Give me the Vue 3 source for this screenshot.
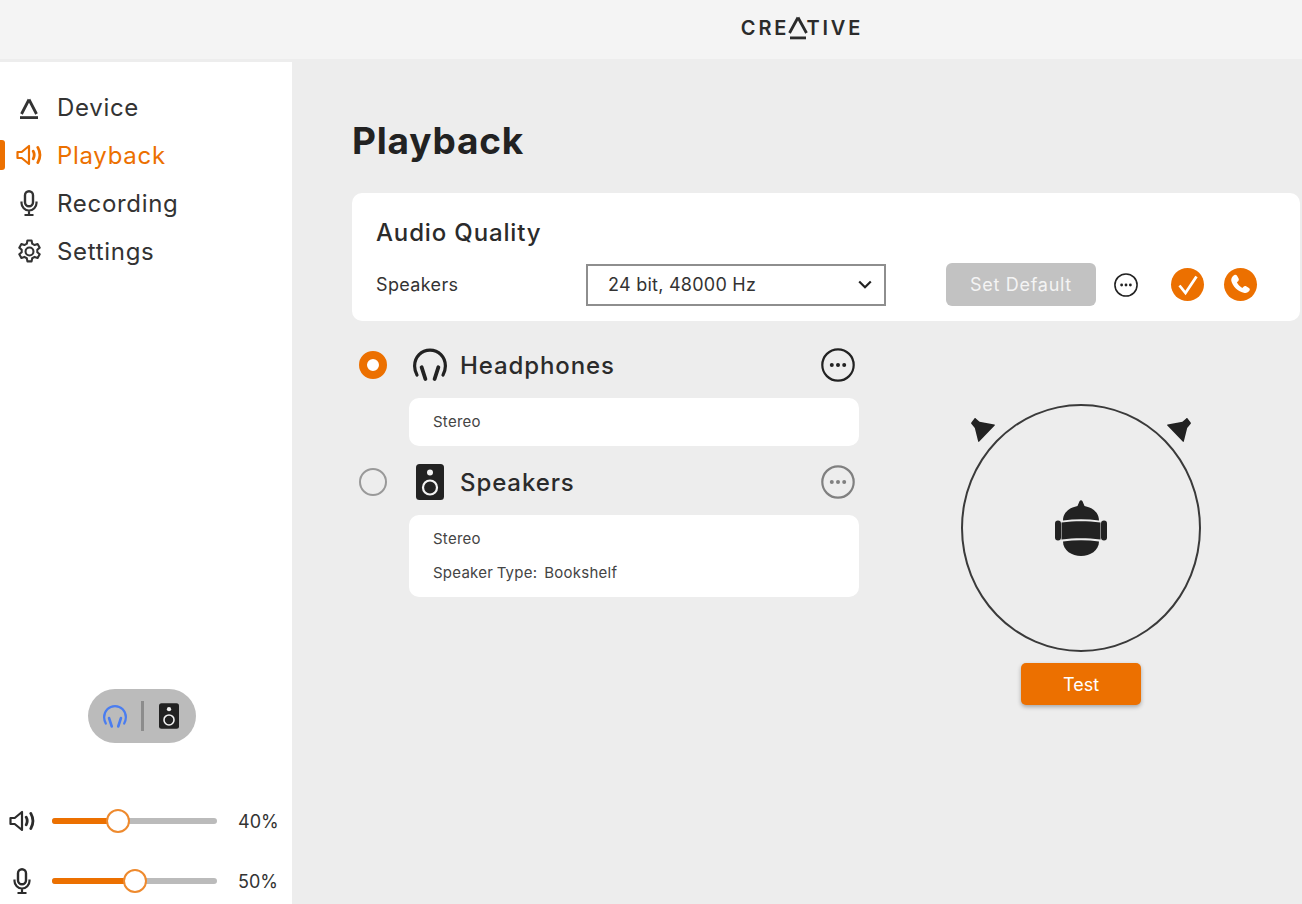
<template>
  <div class="app">
    <svg class="defs" aria-hidden="true">
      <symbol id="i-headphones" viewBox="0 0 34 34">
        <path d="M4 27C2.400 24 1.600 21 1.600 18 1.600 9 8.400 2.200 17 2.200S32.400 9 32.400 18c0 3-.8 6-2.400 9" fill="none" stroke="currentColor" stroke-width="3.200" stroke-linecap="round" />
        <path d="M8.600 19.200 12.400 31M25.400 19.200 21.600 31" fill="none" stroke="currentColor" stroke-width="3.800" stroke-linecap="round" />
      </symbol>
      <symbol id="i-speaker" viewBox="0 0 28 36">
        <rect width="28" height="36" rx="3.500" fill="#222" />
        <circle cx="14" cy="8.500" r="3" fill="#f2f2f2" />
        <circle cx="14" cy="23.500" r="7" fill="none" stroke="#f2f2f2" stroke-width="2.200" />
      </symbol>
      <symbol id="i-volume" viewBox="0 0 26 22">
        <path d="M1.500 8h4.200L13 2v18l-7.300-6H1.500z" fill="none" stroke="currentColor" stroke-width="2.200" stroke-linejoin="round" />
        <path d="M17.200 7.200c1.300 2.400 1.300 5.200 0 7.600M21.800 3.400c2.600 4.600 2.600 10.600 0 15.200" fill="none" stroke="currentColor" stroke-width="2.800" stroke-linecap="round" />
      </symbol>
      <symbol id="i-mic" viewBox="0 0 18 26">
        <rect x="5" y="1.200" width="8" height="15" rx="4" fill="none" stroke="currentColor" stroke-width="2.400" />
        <path d="M1.500 11.500v1.500a7.500 7.500 0 0 0 15 0v-1.500M9 20.500V24.500M4.500 25h9" fill="none" stroke="currentColor" stroke-width="2.200" />
      </symbol>
      <symbol id="i-gear" viewBox="0 0 24 24">
        <path d="M10 1.500h4l.6 3 2.300 1.300 2.900-1 2 3.500-2.300 2v2.400l2.300 2-2 3.500-2.900-1-2.300 1.300-.6 3h-4l-.6-3-2.300-1.300-2.900 1-2-3.500 2.300-2v-2.400l-2.300-2 2-3.500 2.900 1 2.300-1.300z" fill="none" stroke="currentColor" stroke-width="2" stroke-linejoin="round" />
        <circle cx="12" cy="12" r="3.800" fill="none" stroke="currentColor" stroke-width="2" />
      </symbol>
      <symbol id="i-logo" viewBox="0 0 20 24">
        <path d="M10 4.500 2.500 19M10 4.500 17.500 19" fill="none" stroke="currentColor" stroke-width="2.800" />
        <rect x="1" y="21.200" width="18" height="2.800" fill="currentColor" />
      </symbol>
      <symbol id="i-more" viewBox="0 0 34 34">
        <circle cx="17" cy="17" r="15.700" fill="none" stroke="currentColor" stroke-width="2.200" />
        <circle cx="10.800" cy="17" r="2" fill="currentColor" />
        <circle cx="17" cy="17" r="2" fill="currentColor" />
        <circle cx="23.200" cy="17" r="2" fill="currentColor" />
      </symbol>
      <symbol id="i-cone" viewBox="0 0 24 24">
        <path d="M4.800.4 8.600 3.800 23.400 6.400c.6.100.7.600.3 1L8.300 23.600c-.4.500-1 .4-1.200-.3L3.800 10 .5 6c-.5-.5-.5-1.200 0-1.700L3.400.4c.4-.4 1-.4 1.400 0z" fill="#222" />
      </symbol>
    </svg>

    <header class="topbar">
      <div class="logo">CRE<span class="logo-a">A<svg viewBox="0 0 22 24"><path d="M11 1.500 2.500 17M11 1.500l8.500 15.500" fill="none" stroke="#2b2b2b" stroke-width="2.800" /><rect x="3" y="20.500" width="16" height="2.800" fill="#2b2b2b" /></svg></span>TIVE</div>
    </header>

    <div class="body">
      <aside class="sidebar">
        <nav class="nav">
          <a v-for="item in navItems" :key="item.label" class="nav-item" :class="{ active: item.active }">
            <span class="nav-icon">
              <svg :width="item.w" :height="item.h"><use :href="item.icon" /></svg>
            </span>
            <span>{{ item.label }}</span>
          </a>
        </nav>

        <div class="spacer"></div>

        <div class="output-toggle">
          <svg class="t-head" width="24" height="25"><use href="#i-headphones" /></svg>
          <span class="t-sep"></span>
          <svg width="20" height="26"><use href="#i-speaker" /></svg>
        </div>

        <div class="sliders">
          <div v-for="s in sliders" :key="s.icon" class="slider-row">
            <span class="slider-icon">
              <svg :width="s.w" :height="s.h"><use :href="s.icon" /></svg>
            </span>
            <div class="track">
              <div class="fill" :style="{ width: s.value + '%' }"></div>
              <div class="thumb" :style="{ left: s.value + '%' }"></div>
            </div>
            <span class="pct">{{ s.value }}%</span>
          </div>
        </div>
      </aside>

      <main class="main">
        <h1 class="title">Playback</h1>

        <section class="card">
          <h2 class="card-title">Audio Quality</h2>
          <div class="card-row">
            <span class="row-label">Speakers</span>
            <div class="select">
              <span>24 bit, 48000 Hz</span>
              <svg width="14" height="9" viewBox="0 0 14 9"><path d="M1.200 1.500 7 7.200l5.800-5.700" fill="none" stroke="#222" stroke-width="2.200" /></svg>
            </div>
            <button class="btn-default">Set Default</button>
            <svg class="more-small" width="24" height="24"><use href="#i-more" /></svg>
            <span class="badge first">
              <svg width="22" height="22" viewBox="0 0 22 22"><path d="M2.500 11.500 8.500 19 19.500 2.500" fill="none" stroke="#fff" stroke-width="2.800" /></svg>
            </span>
            <span class="badge">
              <svg width="27" height="27" viewBox="0 0 24 24"><path d="M6.600 3.500c.8-.4 1.700-.2 2.200.6l1.500 2.600c.4.800.3 1.700-.4 2.300l-1.100 1c.9 2 2.700 3.900 4.800 5l1.100-1.100c.6-.6 1.500-.8 2.300-.3l2.500 1.500c.8.500 1 1.500.5 2.300-1 1.500-2.700 2.500-4.400 2.100C9.500 18.300 5 13.600 3.800 8.700c-.3-2.100.9-4.100 2.800-5.200z" fill="#fff" /></svg>
            </span>
          </div>
        </section>

        <div class="content">
          <div class="outputs">
            <div v-for="o in outputs" :key="o.name" class="output">
              <div class="output-head">
                <span class="radio" :class="{ on: o.selected }"></span>
                <span class="output-icon">
                  <svg :width="o.w" :height="o.h"><use :href="o.icon" /></svg>
                </span>
                <span class="output-name">{{ o.name }}</span>
                <svg class="more" :class="{ dim: !o.selected }" width="34" height="34"><use href="#i-more" /></svg>
              </div>
              <div class="details">
                <div v-for="line in o.details" :key="line" class="detail">{{ line }}</div>
              </div>
            </div>
          </div>

          <div class="stage">
            <div class="ring">
              <svg class="cone left" width="24" height="24"><use href="#i-cone" /></svg>
              <svg class="cone right" width="24" height="24"><use href="#i-cone" /></svg>
              <svg class="head" width="52" height="56" viewBox="0 0 52 56">
                <path d="M8 20.500C8 12 15 7.500 22.500 6L24.500 1.200c.7-1.200 2.300-1.200 3 0L29.500 6C37 7.500 44 12 44 20.500 32 18.900 20 18.900 8 20.500z" fill="#222" />
                <path d="M6.500 22.500C20 20.700 32 20.700 45.500 22.500V39.500C32 37.800 20 37.800 6.500 39.500z" fill="#222" />
                <rect x="0" y="20.500" width="6" height="20" rx="3" fill="#222" />
                <rect x="46" y="20.500" width="6" height="20" rx="3" fill="#222" />
                <path d="M8 41.500C20 39.900 32 39.900 44 41.500 44 50.500 35 56 26 56S8 50.500 8 41.500z" fill="#222" />
              </svg>
            </div>
            <button class="btn-test">Test</button>
          </div>
        </div>
      </main>
    </div>
  </div>
</template>

<script setup>
const navItems = [
  { label: 'Device', icon: '#i-logo', w: 20, h: 24 },
  { label: 'Playback', icon: '#i-volume', w: 26, h: 22, active: true },
  { label: 'Recording', icon: '#i-mic', w: 18, h: 26 },
  { label: 'Settings', icon: '#i-gear', w: 25, h: 25 }
]

const sliders = [
  { icon: '#i-volume', w: 27, h: 22, value: 40 },
  { icon: '#i-mic', w: 18, h: 26, value: 50 }
]

const outputs = [
  { name: 'Headphones', icon: '#i-headphones', w: 34, h: 34, selected: true, details: ['Stereo'] },
  { name: 'Speakers', icon: '#i-speaker', w: 28, h: 36, selected: false, details: ['Stereo', 'Speaker Type:  Bookshelf'] }
]
</script>

<style>
html, body {
  margin: 0;
  background: #ededed;
}
</style>

<style scoped>
.app {
  width: 1302px;
  height: 904px;
  overflow: hidden;
  display: flex;
  flex-direction: column;
  background: #ededed;
  color: #222;
  font-family: Inter, "Liberation Sans", sans-serif;
}

.defs {
  width: 0;
  height: 0;
  position: absolute;
}

.topbar {
  height: 59px;
  flex: none;
  background: #f4f4f4;
  display: flex;
  align-items: center;
  justify-content: center;
  padding-left: 302px;
  box-sizing: border-box;
}

.logo {
  font-size: 20px;
  font-weight: 600;
  letter-spacing: 2.800px;
  color: #2b2b2b;
  line-height: 24px;
  margin-bottom: 3px;
}

.logo-a {
  position: relative;
  color: transparent;
}

.logo-a svg {
  position: absolute;
  left: -2px;
  top: 0;
  width: 22px;
  height: 24px;
}

.body {
  flex: 1;
  display: flex;
  min-height: 0;
  padding-top: 3px;
}

.sidebar {
  width: 292px;
  flex: none;
  background: #fff;
  display: flex;
  flex-direction: column;
  padding-top: 21px;
  padding-bottom: 3px;
  box-sizing: border-box;
}

.nav {
  display: flex;
  flex-direction: column;
}

.nav-item {
  height: 48px;
  display: flex;
  align-items: center;
  position: relative;
  font-size: 24px;
  color: #333;
  letter-spacing: 0.700px;
}

.nav-item.active {
  color: #ec7000;
}

.nav-item.active::before {
  content: "";
  position: absolute;
  left: 0;
  top: 9px;
  width: 5px;
  height: 30px;
  border-radius: 0 3px 3px 0;
  background: #ec7000;
}

.nav-icon {
  display: flex;
  justify-content: center;
  width: 57px;
  box-sizing: border-box;
  padding-left: 1px;
  flex: none;
}

.spacer {
  flex: 1;
}

.output-toggle {
  align-self: flex-start;
  margin-left: 88px;
  width: 108px;
  height: 54px;
  box-sizing: border-box;
  border-radius: 27px;
  background: #bbb;
  display: flex;
  align-items: center;
  padding-left: 15px;
}

.t-head {
  color: #4a7df0;
}

.t-sep {
  width: 3px;
  height: 30px;
  background: #8c8c8c;
  margin: 0 15px 0 14px;
}

.sliders {
  margin-top: 58px;
  display: flex;
  flex-direction: column;
  gap: 20px;
}

.slider-row {
  height: 40px;
  display: flex;
  align-items: center;
  padding-left: 9px;
  color: #2b2b2b;
}

.slider-icon {
  width: 26px;
  display: flex;
  justify-content: center;
  flex: none;
}

.track {
  margin-left: 17px;
  width: 165px;
  height: 6px;
  border-radius: 3px;
  background: #bbb;
  position: relative;
  flex: none;
}

.fill {
  height: 100%;
  border-radius: 3px;
  background: #ec7000;
}

.thumb {
  position: absolute;
  top: 50%;
  width: 24px;
  height: 24px;
  border: 2px solid #ee8a2e;
  border-radius: 50%;
  background: #fff;
  transform: translate(-50%, -50%);
  box-sizing: border-box;
}

.pct {
  margin-left: 21px;
  font-size: 18px;
  color: #333;
}

.main {
  flex: 1;
  min-width: 0;
  padding: 0 2px 0 60px;
}

.title {
  margin: 56px 0 0;
  height: 46px;
  line-height: 46px;
  font-size: 37px;
  font-weight: 700;
  letter-spacing: 0.800px;
  color: #222;
}

.card {
  margin-top: 29px;
  height: 128px;
  box-sizing: border-box;
  background: #fff;
  border-radius: 10px;
  padding: 24px 24px 0;
}

.card-title {
  margin: 0;
  font-size: 24px;
  line-height: 32px;
  font-weight: 500;
  letter-spacing: 0.850px;
  color: #2b2b2b;
}

.card-row {
  margin-top: 14px;
  height: 43px;
  display: flex;
  align-items: center;
}

.row-label {
  width: 210px;
  flex: none;
  font-size: 18px;
  letter-spacing: 0.350px;
  color: #333;
}

.select {
  width: 300px;
  height: 42px;
  box-sizing: border-box;
  border: 2px solid #8e8e8e;
  display: flex;
  align-items: center;
  justify-content: space-between;
  padding: 0 12px 0 20px;
  font-size: 18px;
  letter-spacing: 0.250px;
  color: #333;
  flex: none;
}

.btn-default {
  margin-left: 60px;
  width: 150px;
  height: 43px;
  flex: none;
  border: none;
  border-radius: 6px;
  background: #c2c2c2;
  color: #f4f4f4;
  font: 400 18px Inter, "Liberation Sans", sans-serif;
  letter-spacing: 0.700px;
}

.more-small {
  margin-left: 18px;
  flex: none;
  color: #222;
}

.badge {
  width: 33px;
  height: 33px;
  border-radius: 50%;
  background: #ec7000;
  display: flex;
  align-items: center;
  justify-content: center;
  margin-left: 20px;
  flex: none;
}

.badge.first {
  margin-left: 33px;
}

.content {
  display: flex;
}

.outputs {
  width: 507px;
  flex: none;
  padding-top: 24px;
  display: flex;
  flex-direction: column;
  gap: 16px;
}

.output-head {
  height: 40px;
  display: flex;
  align-items: center;
  padding: 0 4px 0 7px;
}

.radio {
  width: 28px;
  height: 28px;
  box-sizing: border-box;
  border-radius: 50%;
  border: 2px solid #999;
  flex: none;
}

.radio.on {
  border: 8.500px solid #ec7000;
  background: #fff;
}

.output-icon {
  display: flex;
  justify-content: center;
  flex: none;
  padding-left: 12px;
  box-sizing: border-box;
  width: 73px;
}

.output-name {
  flex: 1;
  font-size: 24px;
  font-weight: 500;
  letter-spacing: 0.900px;
  color: #2b2b2b;
}

.more {
  color: #222;
  flex: none;
}

.more.dim {
  color: #808080;
}

.details {
  margin: 13px 0 0 57px;
  padding: 7px 24px;
  background: #fff;
  border-radius: 10px;
}

.detail {
  height: 34px;
  line-height: 34px;
  font-size: 15px;
  letter-spacing: 0.250px;
  word-spacing: -1px;
  color: #444;
  white-space: pre;
}

.stage {
  margin-left: 102px;
  padding-top: 83px;
  display: flex;
  flex-direction: column;
  align-items: center;
  gap: 11px;
}

.ring {
  width: 240px;
  height: 248px;
  box-sizing: border-box;
  border: 2px solid #3a3a3a;
  border-radius: 50%;
  position: relative;
}

.cone {
  position: absolute;
  top: 12px;
}

.cone.left {
  left: 8px;
}

.cone.right {
  right: 8px;
  transform: scaleX(-1);
}

.head {
  position: absolute;
  left: 92px;
  top: 94px;
}

.btn-test {
  width: 120px;
  height: 42px;
  border: none;
  border-radius: 5px;
  background: #ec7000;
  color: #fff;
  font: 400 18px Inter, "Liberation Sans", sans-serif;
  box-shadow: 0 2px 4px rgba(0, 0, 0, 0.3);
}
</style>
